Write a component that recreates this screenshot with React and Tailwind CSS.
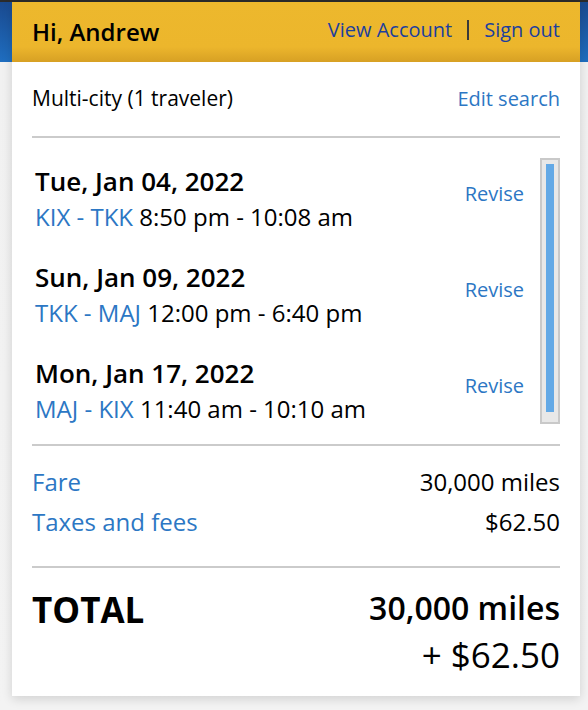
const SEGMENTS = [
  { date: 'Tue, Jan 04, 2022', route: 'KIX - TKK', time: '8:50 pm - 10:08 am' },
  { date: 'Sun, Jan 09, 2022', route: 'TKK - MAJ', time: '12:00 pm - 6:40 pm' },
  { date: 'Mon, Jan 17, 2022', route: 'MAJ - KIX', time: '11:40 am - 10:10 am' },
]

export default function App() {
  return (
    <div
      className="min-h-[710px] border-t-2 border-[#2b2b2b] bg-[linear-gradient(to_bottom,#1a4a90_0px,#1f6ec0_60px,#f1f1f1_60px,#f3f3f3_100%)] text-black"
      style={{ fontFamily: '"Open Sans", "Noto Sans", sans-serif' }}
    >
      <div className="ml-[12px] mr-[8px] bg-white shadow-[0_3px_10px_rgba(0,0,0,0.14)]">
        {/* header */}
        <div className="h-[60px] px-[20px] flex items-center justify-between bg-[linear-gradient(to_bottom,#edb82d_0%,#ecb62c_75%,#d7a024_100%)]">
          <span className="text-[24px] font-semibold leading-none">Hi, Andrew</span>
          <div className="flex items-center text-[20px] text-[#1c3f9e] leading-none -mt-[4px]">
            <span>View Account</span>
            <span className="w-[2px] h-[20px] bg-[#3a3a3a] mx-[15px]" />
            <span>Sign out</span>
          </div>
        </div>

        <div className="px-[20px]">
          <div className="h-[74px] flex items-center justify-between">
            <span className="text-[21px]">Multi-city (1 traveler)</span>
            <span className="text-[20px] text-[#2c77c4]">Edit search</span>
          </div>

          <div className="flex border-t-2 border-b-2 border-[#cbcbcb]">
            <div className="flex-1 pt-[26px] pb-[18px] pl-[3px] pr-[16px] flex flex-col gap-[26px]">
              {SEGMENTS.map((s) => (
                <div key={s.date} className="flex items-start justify-between">
                  <div>
                    <div className="text-[26px] font-semibold leading-[35px]">{s.date}</div>
                    <div className="text-[24px] leading-[35px]">
                      <span className="text-[#2c77c4]">{s.route}</span> {s.time}
                    </div>
                  </div>
                  <span className="pt-[17px] text-[20px] leading-[26px] text-[#2c77c4]">Revise</span>
                </div>
              ))}
            </div>
            <div className="w-[20px] my-[20px] border-2 border-[#c9c9c9] bg-[#e8e8e8] pt-[4px] pb-[10px] px-[4px]">
              <div className="h-full bg-[#63a9e6]" />
            </div>
          </div>

          <div className="pt-[16px] pb-[24px] text-[24px] border-b-2 border-[#cbcbcb]">
            <div className="flex justify-between leading-[40px]">
              <span className="text-[#2c77c4]">Fare</span>
              <span>30,000 miles</span>
            </div>
            <div className="flex justify-between leading-[40px]">
              <span className="text-[#2c77c4]">Taxes and fees</span>
              <span>$62.50</span>
            </div>
          </div>

          <div className="pt-[20px] pb-[14px] flex justify-between">
            <span className="text-[35px] font-bold leading-[44px]">TOTAL</span>
            <div className="text-right">
              <div className="text-[32px] font-semibold leading-[40px]">30,000 miles</div>
              <div className="text-[35px] leading-[54px]">+ $62.50</div>
            </div>
          </div>
        </div>
      </div>
    </div>
  )
}
